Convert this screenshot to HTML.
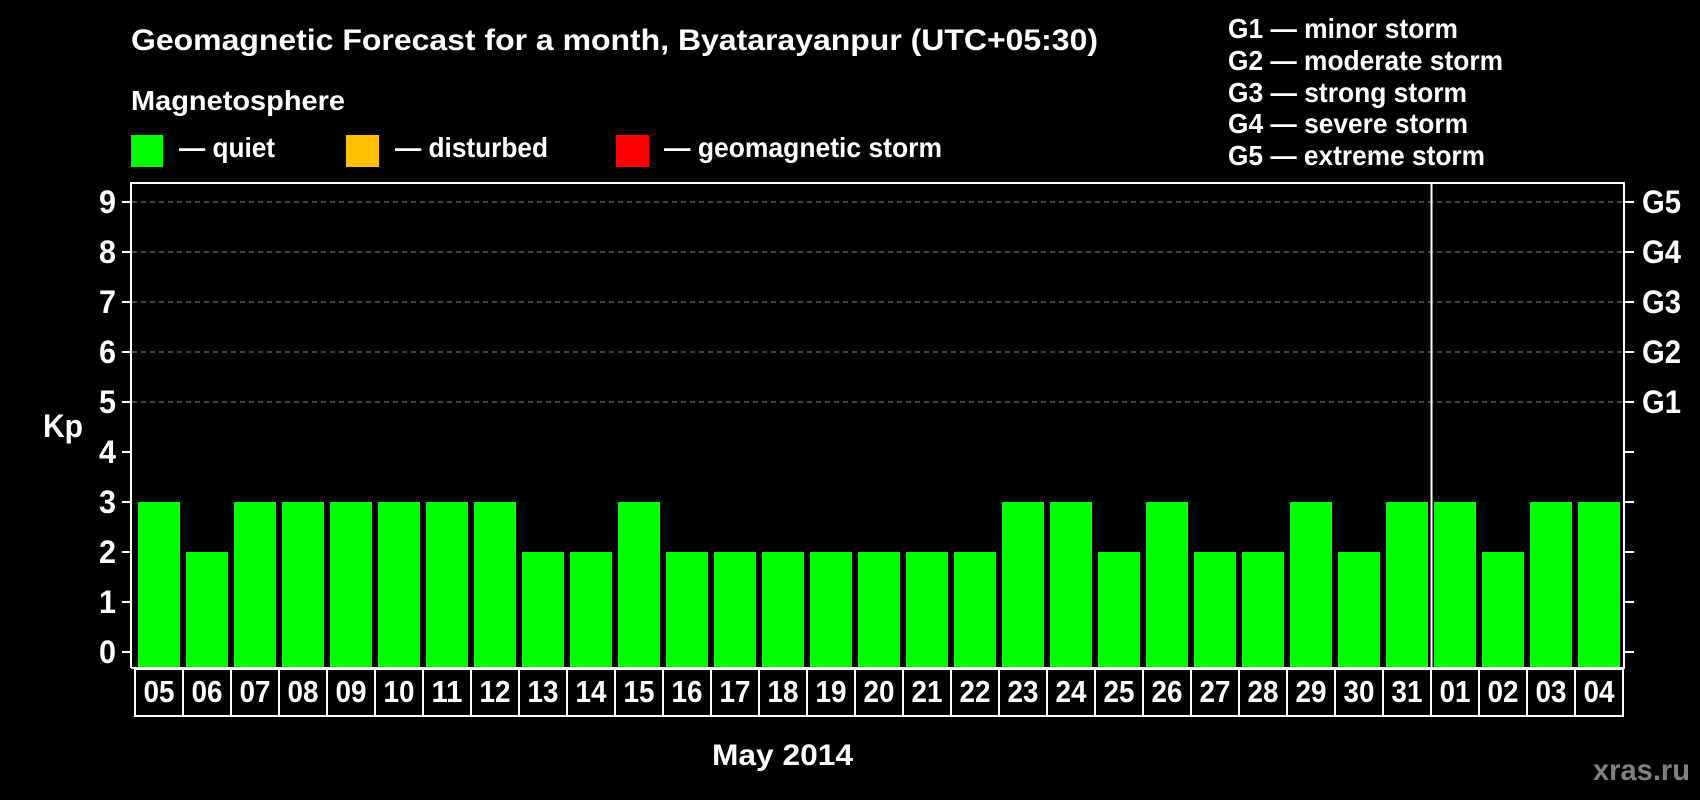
<!DOCTYPE html>
<html><head><meta charset="utf-8"><style>
html,body{margin:0;padding:0;background:#000;}
svg{display:block;font-family:"Liberation Sans",Arial,sans-serif;font-weight:bold;}
</style></head><body>
<svg width="1700" height="800" viewBox="0 0 1700 800" xmlns="http://www.w3.org/2000/svg">
<rect width="1700" height="800" fill="#000"/>
<g fill="#fff">
<text x="131" y="50" font-size="30" textLength="967" lengthAdjust="spacingAndGlyphs">Geomagnetic Forecast for a month, Byatarayanpur (UTC+05:30)</text>
<text x="131" y="110" font-size="28" textLength="214" lengthAdjust="spacingAndGlyphs">Magnetosphere</text>
<text x="179" y="157" font-size="28" textLength="96" lengthAdjust="spacingAndGlyphs">— quiet</text>
<text x="395" y="157" font-size="28" textLength="153" lengthAdjust="spacingAndGlyphs">— disturbed</text>
<text x="664" y="157" font-size="28" textLength="278" lengthAdjust="spacingAndGlyphs">— geomagnetic storm</text>
<text x="1228" y="38" font-size="28" textLength="230" lengthAdjust="spacingAndGlyphs">G1 — minor storm</text>
<text x="1228" y="70" font-size="28" textLength="275" lengthAdjust="spacingAndGlyphs">G2 — moderate storm</text>
<text x="1228" y="102" font-size="28" textLength="239" lengthAdjust="spacingAndGlyphs">G3 — strong storm</text>
<text x="1228" y="133" font-size="28" textLength="240" lengthAdjust="spacingAndGlyphs">G4 — severe storm</text>
<text x="1228" y="165" font-size="28" textLength="257" lengthAdjust="spacingAndGlyphs">G5 — extreme storm</text>
<text x="43" y="437" font-size="32" textLength="40" lengthAdjust="spacingAndGlyphs">Kp</text>
<text x="712" y="765" font-size="30" textLength="141" lengthAdjust="spacingAndGlyphs">May 2014</text>
</g>
<text x="1593" y="780" font-size="30" fill="#808080" textLength="97" lengthAdjust="spacingAndGlyphs">xras.ru</text>
<rect x="131" y="135" width="32" height="32" fill="#00ff00"/>
<rect x="346" y="135" width="33" height="32" fill="#ffc000"/>
<rect x="616" y="135" width="33" height="32" fill="#ff0000"/>
<g stroke="#888" stroke-width="1" stroke-dasharray="5,4">
<line x1="132" y1="202" x2="1623" y2="202"/>
<line x1="132" y1="252" x2="1623" y2="252"/>
<line x1="132" y1="302" x2="1623" y2="302"/>
<line x1="132" y1="352" x2="1623" y2="352"/>
<line x1="132" y1="402" x2="1623" y2="402"/>
</g>
<g fill="#00ff00" id="bars"></g>
<g stroke="#fff" stroke-width="2" fill="none">
<polyline points="131,668 131,183 1624,183 1624,668 131,668"/>
<line x1="1431.5" y1="183" x2="1431.5" y2="668"/>
</g>
<g id="ax" fill="#fff" font-size="32"></g>
<g id="lb" fill="#fff" font-size="31"></g>
<script>
var v=[3,2,3,3,3,3,3,3,2,2,3,2,2,2,2,2,2,2,3,3,2,3,2,2,3,2,3,3,2,3,3];
var d=["05","06","07","08","09","10","11","12","13","14","15","16","17","18","19","20","21","22","23","24","25","26","27","28","29","30","31","01","02","03","04"];
var ns="http://www.w3.org/2000/svg";
function el(p,t,a,tx){var e=document.createElementNS(ns,t);for(var k in a)e.setAttribute(k,a[k]);if(tx)e.textContent=tx;document.getElementById(p).appendChild(e);}
for(var i=0;i<31;i++){
 var x=138+48*i;
 el("bars","rect",{x:x,y:652-50*v[i],width:42,height:16+50*v[i]});
 el("lb","rect",{x:135+48*i,y:669,width:48,height:47,fill:"none",stroke:"#fff","stroke-width":2});
 el("lb","text",{x:143.5+48*i,y:702,textLength:31,lengthAdjust:"spacingAndGlyphs"},d[i]);
}
for(var k=0;k<=9;k++){
 var y=652-50*k;
 el("ax","line",{x1:122,y1:y,x2:131,y2:y,stroke:"#fff","stroke-width":2});
 el("ax","line",{x1:1624,y1:y,x2:1634,y2:y,stroke:"#fff","stroke-width":2});
 el("ax","text",{x:99,y:y+11,textLength:17,lengthAdjust:"spacingAndGlyphs"},String(k));
 if(k>=5)el("ax","text",{x:1642,y:y+11,textLength:39,lengthAdjust:"spacingAndGlyphs"},"G"+(k-4));
}
</script>
</svg>
</body></html>
